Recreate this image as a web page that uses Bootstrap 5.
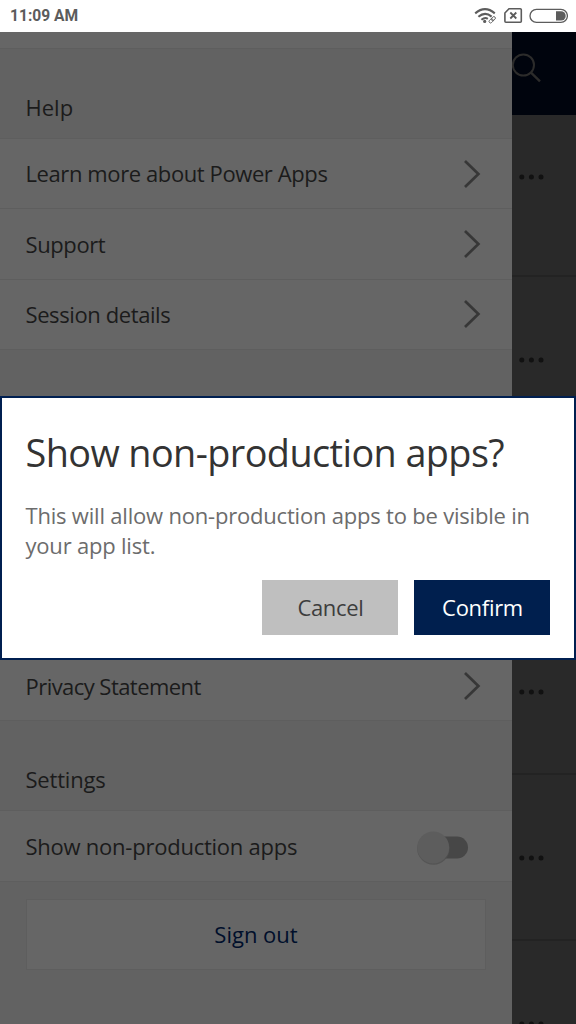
<!DOCTYPE html>
<html lang="en">
<head>
<meta charset="utf-8">
<meta name="viewport" content="width=device-width, initial-scale=1">
<title>Power Apps</title>
<link href="https://cdn.jsdelivr.net/npm/bootstrap@5.3.0/dist/css/bootstrap.min.css" rel="stylesheet">
<style>
html,body{height:100%;overflow:hidden}
body{font-family:"Open Sans","Noto Sans",sans-serif;font-size:22px;line-height:30px;color:#1b1b1b;background:#292929}
.statusbar{height:32px;background:#fff;color:#5c5c5c;font:bold 15.6px/32px Roboto,sans-serif;padding:0 8px 0 10px}
.drawer{width:512px;background:#626262}
.lead-in{height:17px;background:#666;border-bottom:1px solid #5e5e5e}
.group-title{height:89px;padding:43px 25.5px 0;line-height:30px}
.group-legal{height:90px}
.group-settings{letter-spacing:-.2px}
.menu .list-group-item{height:70.4px;padding:0 31px 0 25.5px;background:#666;color:#1b1b1b;border:0;border-top:1px solid #5e5e5e}
.menu{border-bottom:1px solid #5e5e5e}
.menu-help .list-group-item{height:70.3px}
.menu-help span{position:relative;top:-.4px}
.menu-legal{margin-top:-1px}
.track-tight{letter-spacing:-.55px}
.track-mid{letter-spacing:-.4px}
.track-soft{letter-spacing:-.24px}
.switch{width:52px;height:34px;margin:3px 12px 0 0}
.signout{height:71px;margin:17px 26px 0;background:#666;border:1px solid #5e5e5e;border-radius:0;color:#000f2b;font-size:22px;padding:0}
.strip-head{height:83px;background:#00040d}
.strip-item{height:166px;border-bottom:2px solid #232323;padding:78px 0 0 5px}
.strip-item.first-item{height:162px;padding-top:57px}
.strip-item svg,.strip-head svg{display:block}
.dialog-box{top:396px;left:0;width:576px;height:264px;background:#fff;border:2px solid #001f50;border-radius:0;padding:33px 24px 0 23.5px}
.dialog-box h1{font-size:37.8px;line-height:44px;font-weight:400;color:#333;letter-spacing:-.58px;margin:0 0 25px}
.dialog-box p{color:#6c6c6c;margin:0 0 19.6px;letter-spacing:-.2px;white-space:nowrap}
.dialog-box .btn{width:136px;height:55px;border:0;border-radius:0;font-size:22px;letter-spacing:-.3px;padding:0 0 0 1px}
.btn-no{background:#bfbfbf;color:#3d3d3d}
.btn-yes{background:#001f4e;color:#fff}
</style>
<script src="https://cdn.jsdelivr.net/npm/bootstrap@5.3.0/dist/js/bootstrap.bundle.min.js"></script>
</head>
<body class="d-flex flex-column position-relative">
<svg class="d-none">
  <symbol id="chev" viewBox="0 0 18 30"><path d="M2 2 15.4 15 2 28" fill="none" stroke="#373737" stroke-width="2.7"/></symbol>
  <symbol id="dots" viewBox="0 0 28 10"><g fill="#111"><circle cx="4.8" cy="5" r="2.5"/><circle cx="14.4" cy="5" r="2.5"/><circle cx="24" cy="5" r="2.5"/></g></symbol>
</svg>
<header class="statusbar d-flex justify-content-between flex-shrink-0">
  <span>11:09 AM</span>
  <svg width="94" height="32" viewBox="474 0 94 32" fill="none" stroke="#5c5c5c">
    <path d="M475.2 13.4Q485 5 494.8 13.4M478.4 16.8Q485 11.2 491.6 16.6M481.4 19.8Q485 16.9 487.8 18.8" stroke-width="2.1"/>
    <circle cx="484.7" cy="21.4" r="1.6" fill="#5c5c5c" stroke="none"/>
    <g transform="rotate(-45 492.2 19.8)" stroke-width=".9"><rect x="488.4" y="18.3" width="4.6" height="3" rx="1.5"/><rect x="491.5" y="18.3" width="4.6" height="3" rx="1.5"/></g>
    <path d="M509 8.8h11.3q1 0 1 1v11.4q0 1-1 1h-14.4q-1 0-1-1V13z" stroke-width="1.6"/>
    <path d="m510.3 12.5 6 6m0-6-6 6" stroke-width="1.8"/>
    <rect x="530" y="9.4" width="37.4" height="13" rx="6.5" stroke-width="1.3"/>
    <path d="M556 11.2h5a4.7 4.7 0 0 1 0 9.4h-5z" fill="#5c5c5c" stroke="none"/>
  </svg>
</header>
<main class="d-flex flex-grow-1 overflow-hidden">
  <section class="drawer flex-shrink-0 overflow-hidden">
    <div class="lead-in"></div>
    <div class="group-title">Help</div>
    <div class="list-group list-group-flush menu menu-help">
      <div class="list-group-item d-flex align-items-center justify-content-between"><span class="track-mid">Learn more about Power Apps</span><svg width="18" height="30"><use href="#chev"/></svg></div>
      <div class="list-group-item d-flex align-items-center justify-content-between"><span class="track-mid">Support</span><svg width="18" height="30"><use href="#chev"/></svg></div>
      <div class="list-group-item d-flex align-items-center justify-content-between"><span class="track-mid">Session details</span><svg width="18" height="30"><use href="#chev"/></svg></div>
    </div>
    <div class="group-title group-legal"></div>
    <div class="list-group list-group-flush menu menu-legal">
      <div class="list-group-item"></div>
      <div class="list-group-item"></div>
      <div class="list-group-item"></div>
      <div class="list-group-item d-flex align-items-center justify-content-between"><span class="track-tight">Privacy Statement</span><svg width="18" height="30"><use href="#chev"/></svg></div>
    </div>
    <div class="group-title group-settings">Settings</div>
    <div class="list-group list-group-flush menu">
      <div class="list-group-item d-flex align-items-center justify-content-between"><span class="track-soft">Show non-production apps</span>
        <svg class="switch" viewBox="0 0 52 34"><rect x="10" y="5.5" width="41" height="22" rx="11" fill="#474747"/><circle cx="16.4" cy="17.6" r="16.2" fill="#505050" opacity=".8"/><circle cx="16.2" cy="16.5" r="16" fill="#5d5d5d"/></svg></div>
    </div>
    <div class="d-grid"><button class="btn signout">Sign out</button></div>
  </section>
  <aside class="flex-grow-1 overflow-hidden">
    <div class="strip-head"><svg width="64" height="83" fill="none" stroke="#2c2c2b" stroke-width="2"><circle cx="11.4" cy="33" r="10.6"/><path d="m19 40.6 9 8.8" stroke-width="2.4"/></svg></div>
    <div class="strip-item first-item"><svg width="28" height="10"><use href="#dots"/></svg></div>
    <div class="strip-item"><svg width="28" height="10"><use href="#dots"/></svg></div>
    <div class="strip-item"></div>
    <div class="strip-item"><svg width="28" height="10"><use href="#dots"/></svg></div>
    <div class="strip-item"><svg width="28" height="10"><use href="#dots"/></svg></div>
    <div class="strip-item"><svg width="28" height="10"><use href="#dots"/></svg></div>
  </aside>
</main>
<div class="dialog-box position-absolute" role="dialog">
  <h1>Show non-production apps?</h1>
  <p>This will allow non-production apps to be visible in<br>your app list.</p>
  <div class="d-flex justify-content-end gap-3"><button class="btn btn-no">Cancel</button><button class="btn btn-yes">Confirm</button></div>
</div>
</body>
</html>
